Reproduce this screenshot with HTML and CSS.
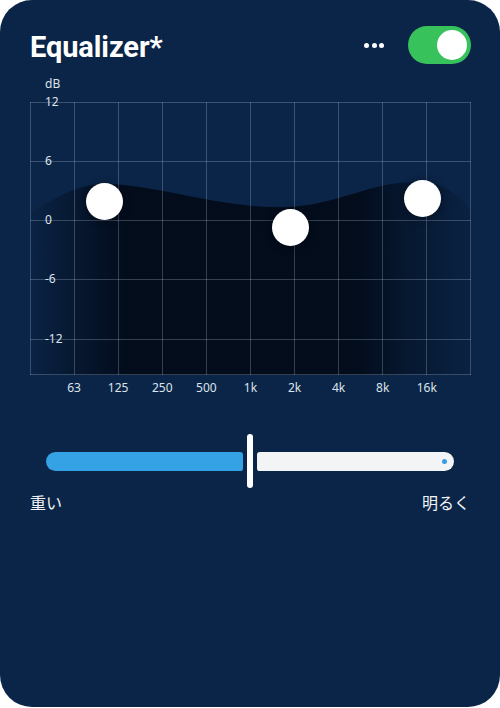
FILE: index.html
```html
<!DOCTYPE html>
<html lang="ja">
<head>
<meta charset="utf-8">
<title>Equalizer</title>
<link rel="stylesheet" href="styles.css">
</head>
<body>
<div class="card">
  <header class="header">
    <h1 class="title">Equalizer*</h1>
    <div class="actions">
      <div class="more"><span></span><span></span><span></span></div>
      <div class="toggle"><div class="toggle-knob"></div></div>
    </div>
  </header>

  <div class="unit">dB</div>
  <div class="chart">
    <svg class="plot" width="441" height="273" viewBox="0 0 441 273">
      <defs>
        <linearGradient id="fade" x1="0" y1="0" x2="1" y2="0">
          <stop offset="0" stop-color="#020b19" stop-opacity="0.08"/>
          <stop offset="0.1" stop-color="#020b19" stop-opacity="0.5"/>
          <stop offset="0.22" stop-color="#020b19" stop-opacity="0.95"/>
          <stop offset="0.74" stop-color="#020b19" stop-opacity="0.95"/>
          <stop offset="0.86" stop-color="#020b19" stop-opacity="0.5"/>
          <stop offset="1" stop-color="#020b19" stop-opacity="0.12"/>
        </linearGradient>
      </defs>
      <path d="M0,111 C30,93 50,81 80,82 C130,84 200,108 260,105 C310,102 340,80 385,80 C415,80 430,93 441,110 L441,273 L0,273 Z" fill="url(#fade)"/>
      <g stroke="rgba(200,215,235,0.25)" stroke-width="1" shape-rendering="crispEdges">
        <line x1="0" y1="0.5" x2="441" y2="0.5"/>
        <line x1="0" y1="59.5" x2="441" y2="59.5"/>
        <line x1="0" y1="118.5" x2="441" y2="118.5"/>
        <line x1="0" y1="177.5" x2="441" y2="177.5"/>
        <line x1="0" y1="237.5" x2="441" y2="237.5"/>
        <line x1="0" y1="272.5" x2="441" y2="272.5"/>
        <line x1="0.5" y1="0" x2="0.5" y2="273"/>
        <line x1="44.5" y1="0" x2="44.5" y2="273"/>
        <line x1="88.5" y1="0" x2="88.5" y2="273"/>
        <line x1="132.5" y1="0" x2="132.5" y2="273"/>
        <line x1="176.5" y1="0" x2="176.5" y2="273"/>
        <line x1="220.5" y1="0" x2="220.5" y2="273"/>
        <line x1="264.5" y1="0" x2="264.5" y2="273"/>
        <line x1="308.5" y1="0" x2="308.5" y2="273"/>
        <line x1="352.5" y1="0" x2="352.5" y2="273"/>
        <line x1="396.5" y1="0" x2="396.5" y2="273"/>
        <line x1="440.5" y1="0" x2="440.5" y2="273"/>
      </g>
    </svg>
    <span class="ylabel" style="top:0px">12</span>
    <span class="ylabel" style="top:59px">6</span>
    <span class="ylabel" style="top:118px">0</span>
    <span class="ylabel" style="top:177px">-6</span>
    <span class="ylabel" style="top:237px">-12</span>
    <div class="knob" style="left:74px;top:99px"></div>
    <div class="knob" style="left:260px;top:125px"></div>
    <div class="knob" style="left:392px;top:96px"></div>
  </div>
  <div class="xlabels">
    <span>63</span><span>125</span><span>250</span><span>500</span><span>1k</span><span>2k</span><span>4k</span><span>8k</span><span>16k</span>
  </div>

  <div class="slider">
    <div class="track track-low"></div>
    <div class="thumb"></div>
    <div class="track track-high"><span class="dot"></span></div>
  </div>
  <div class="slider-labels">
    <span>重い</span>
    <span>明るく</span>
  </div>
</div>
</body>
</html>
```

FILE: styles.css
```css
html, body {
  margin: 0;
  padding: 0;
  background: #ffffff;
}

body {
  width: 500px;
  height: 708px;
  font-family: "Noto Sans", "Noto Sans CJK JP", sans-serif;
  color: #ffffff;
}

.card {
  box-sizing: border-box;
  width: 500px;
  height: 707px;
  background: #0b2548;
  border-radius: 32px;
  padding: 26px 29px 0 30px;
}

.header {
  display: flex;
  align-items: center;
  justify-content: space-between;
  height: 38px;
}

.title {
  margin: 0;
  padding-top: 4px;
  font-family: Roboto, "Liberation Sans", sans-serif;
  font-weight: 700;
  font-size: 29px;
  line-height: 34px;
  letter-spacing: -0.1px;
  color: #ffffff;
}

.actions {
  display: flex;
  align-items: center;
  gap: 24px;
}

.more {
  display: flex;
  gap: 2.5px;
}

.more span {
  width: 5px;
  height: 5px;
  border-radius: 50%;
  background: #ffffff;
}

.toggle {
  box-sizing: border-box;
  width: 63px;
  height: 38px;
  border-radius: 19px;
  background: #38c25c;
  padding: 4px;
  display: flex;
  justify-content: flex-end;
}

.toggle-knob {
  width: 30px;
  height: 30px;
  border-radius: 50%;
  background: #ffffff;
}

.unit {
  margin-top: 13px;
  padding-left: 15px;
  font-size: 12px;
  line-height: 14px;
  color: #dde3ea;
}

.chart {
  position: relative;
  margin-top: 11px;
  width: 441px;
  height: 273px;
}

.plot {
  display: block;
}

.ylabel {
  position: absolute;
  left: 15px;
  transform: translateY(-50%);
  font-size: 12px;
  line-height: 14px;
  color: #dde3ea;
}

.knob {
  position: absolute;
  width: 37px;
  height: 37px;
  margin: -18.5px 0 0 -18.5px;
  border-radius: 50%;
  background: #ffffff;
  box-shadow: 0 1px 8px rgba(0, 0, 0, 0.45);
}

.xlabels {
  display: grid;
  grid-template-columns: repeat(9, 44.1px);
  padding: 0 22px;
  margin-top: 4px;
  font-size: 12px;
  line-height: 18px;
  color: #dde3ea;
}

.xlabels span {
  text-align: center;
}

.slider {
  display: grid;
  grid-template-columns: 1fr 6px 1fr;
  column-gap: 4px;
  align-items: center;
  margin: 37px 17px 0 16px;
  height: 54px;
}

.track {
  height: 19px;
}

.track-low {
  background: #36a2e6;
  border-radius: 10px 3px 3px 10px;
}

.track-high {
  background: #f3f4f6;
  border-radius: 3px 10px 10px 3px;
  display: flex;
  align-items: center;
  justify-content: flex-end;
  padding-right: 7px;
}

.dot {
  width: 5px;
  height: 5px;
  border-radius: 50%;
  background: #3a9ee0;
}

.thumb {
  height: 54px;
  border-radius: 3px;
  background: #ffffff;
}

.slider-labels {
  display: flex;
  justify-content: space-between;
  margin-top: 4px;
  margin-right: 1px;
  font-family: "Noto Sans CJK JP", sans-serif;
  font-size: 16px;
  line-height: 20px;
  color: #f2f4f7;
}
```
